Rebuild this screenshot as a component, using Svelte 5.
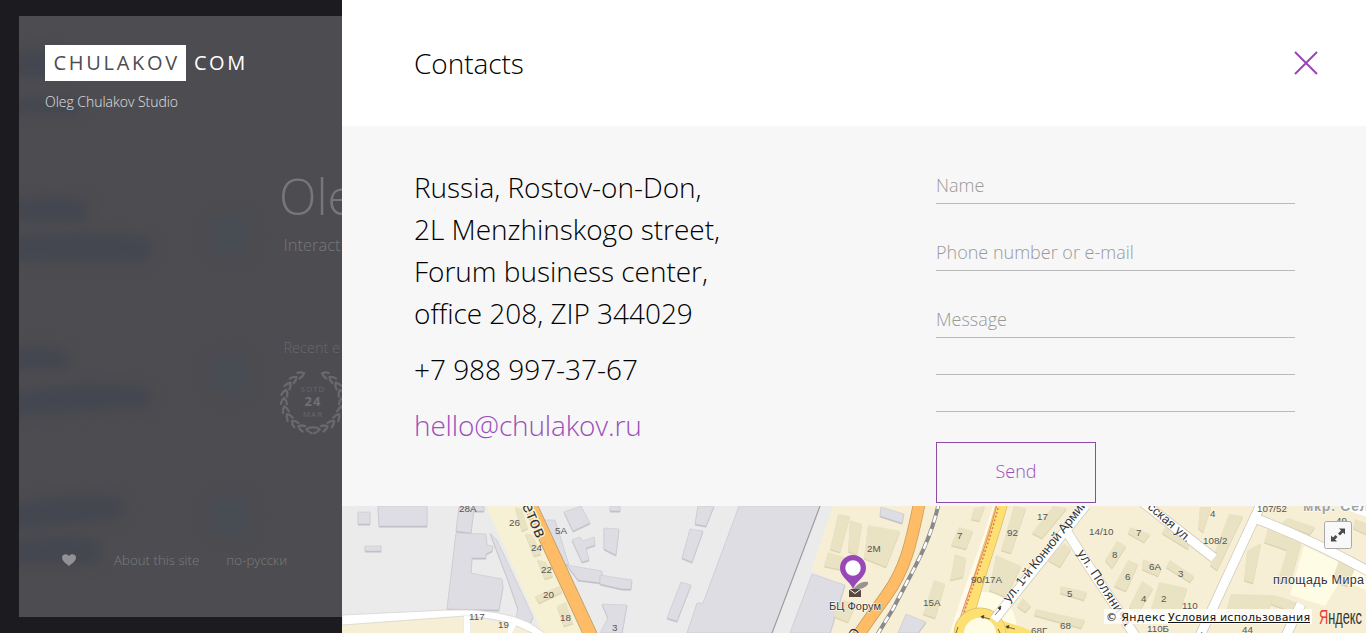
<script>
  const address = ['Russia, Rostov-on-Don,', '2L Menzhinskogo street,', 'Forum business center,', 'office 208, ZIP 344029'];

  const smudges = [
    'M-12 38Q20 30 40 36V62H-12Z', 'M-12 86Q30 76 60 84V98H-12Z',
    'M-12 186Q35 176 66 184Q74 200 62 206L-12 206Z', 'M-12 222Q60 212 130 222Q138 238 126 246L-12 245Z',
    'M-12 334Q25 326 50 336V354H-12Z', 'M-12 378Q60 362 128 372Q136 386 126 392L-12 400Z',
    'M-12 490Q50 474 104 482Q108 496 98 504L-12 514Z', 'M-12 526Q40 516 80 524V548H-12Z'
  ];

  const leaves = Array.from({ length: 10 }, (_, i) => {
    const degrees = 112 + i * 16.5;
    const angle = (degrees * Math.PI) / 180;
    return { x: 29 * Math.cos(angle), y: -29 * Math.sin(angle), turn: -degrees };
  });

  const greyBlocks = [
    '358,512 370,512 370,524 358,524', '378,506 427,506 427,526 379,526', '365,546 381,546 381,551 365,551',
    '459,507 474,508 471,533 456,531', '474,506 484,506 484,511 474,511',
    '456,533 486,534 487,545 493,546 492,551 486,554 486,558 472,558 471,573 481,575 502,579 503,587 499,610 447,609',
    '490,533 497,540 533,617 529,625 516,618 518,609 508,580',
    '564,512 581,506 590,523 573,531', '543,520 555,520 569,565 561,564',
    '572,540 580,537 583,541 594,537 595,545 586,548 589,560 582,562',
    '567,565 602,571 602,583 578,580',
    '604,528 619,529 616,555 604,549', '610,506 620,506 620,511 610,511',
    '600,575 632,580 631,589 622,589 600,584', '602,604 627,605 622,633 600,633 608,618',
    '698,506 714,506 706,526 695,524', '690,529 703,531 692,562 682,558', '681,582 691,585 677,621 667,618',
    '739,506 820,506 772,633 687,633 697,603 703,603',
    '812,574 845,585 830,633 790,633', '881,507 904,514 902,523 880,516',
    '906,614 926,622 918,633 898,633'
  ];

  const sandBlocks = [
    '515,507 522,509 528,528 522,531', '525,533 533,535 541,554 534,556', '537,559 546,562 553,576 545,579',
    '535,596 560,586 562,592 539,603', '557,606 566,602 573,623 564,626',
    '838,514 850,516 840,552 830,549', '850,520 862,524 857,555 848,551', '828,552 860,562 858,573 824,566',
    '868,525 900,531 886,567 864,558', '842,600 856,603 848,622 833,616',
    '974,508 985,506 979,521 971,519', '959,527 973,531 966,549 951,545', '955,554 966,558 963,577 950,580 952,570',
    '934,580 945,584 935,618 923,614', '1014,506 1026,508 1011,553 1001,550', '996,555 1021,566 1006,597 989,590',
    '1053,506 1067,508 1042,538 1032,533', '1064,543 1071,549 1060,567 1048,560',
    '1060,586 1087,592 1084,600 1060,593', '1036,609 1085,620 1081,628 1034,615', '1023,598 1031,606 1025,612 1017,606',
    '1130,527 1150,534 1144,542 1128,533', '1166,526 1190,540 1188,549 1162,533',
    '1128,560 1138,564 1126,591 1114,586', '1143,559 1162,567 1158,576 1142,569',
    '1170,560 1194,576 1190,582 1166,567', '1142,581 1153,588 1138,613 1129,607', '1159,582 1187,588 1178,618 1151,609',
    '1117,541 1126,546 1112,568 1105,560', '1200,507 1211,507 1203,532 1198,528',
    '1229,514 1243,516 1217,570 1210,565', '1288,518 1315,527 1310,534 1280,524',
    '1268,529 1301,543 1290,583 1278,580 1287,550 1264,542', '1247,551 1261,543 1253,583 1244,580',
    '1231,594 1274,595 1267,614 1226,611', '1274,595 1296,602 1294,612 1271,604',
    '1342,552 1358,559 1347,586 1332,580', '1355,519 1366,523 1366,534 1353,528'
  ];

  const numbers = [
    [459, 512, '28А'], [509, 526, '26'], [531, 551, '24'], [541, 573, '22'], [543, 598, '20'], [560, 621, '18'],
    [555, 534, '5А'], [469, 620, '117'], [498, 628, '19'], [612, 631, '3'], [867, 552, '2М'], [957, 539, '7'],
    [1007, 536, '92'], [1037, 520, '17'], [1089, 535, '14/10'], [971, 583, '90/17А'], [923, 606, '15А'],
    [1067, 597, '5'], [1060, 629, '68'], [1031, 634, '68Г'], [1136, 536, '7'], [1210, 517, '4'], [1112, 558, '8'],
    [1203, 544, '108/2'], [1257, 512, '107/52'], [1336, 524, '49'], [1149, 570, '6А'], [1178, 577, '3'],
    [1125, 580, '6'], [1141, 602, '4'], [1161, 602, '2'], [1182, 609, '110'], [1147, 632, '110Б'], [1242, 633, '44']
  ];
</script>

<main>
  <aside>
    <div class="card">
      <svg class="backdrop" width="323" height="601" aria-hidden="true">
        <defs>
          <filter id="haze" x="-20%" y="-20%" width="140%" height="140%" color-interpolation-filters="sRGB"><feGaussianBlur stdDeviation="6" /></filter>
        </defs>
        <g filter="url(#haze)">
          {#each smudges as d}<path {d} fill="#444750" />{/each}
          {#each [219, 359, 501] as cy}<circle cx="211" {cy} r="23" fill="#484c53" />{/each}
        </g>
      </svg>
      <div class="brand"><b>CHULAKOV</b><span>COM</span></div>
      <p class="studio">Oleg Chulakov Studio</p>
      <div class="hero">
        <h1>Ole</h1>
        <p class="sub">Interact</p>
        <p class="events">Recent e</p>
        <svg class="award" width="66" height="68" viewBox="-33 -34 66 68">
          {#each [1, -1] as side}
            <g transform="scale({side} 1)" stroke="#69696c" stroke-width="2.300" fill="none" stroke-linecap="round">
              {#each leaves as leaf}
                <path d="M-3 -4Q-2.500 0 0 2Q2.500 0 3 -4" transform="translate({leaf.x} {leaf.y}) rotate({leaf.turn})" />
              {/each}
            </g>
          {/each}
          <g text-anchor="middle" fill="#68686b" font-weight="400">
            <text y="-9" font-size="8" letter-spacing="1">SOTD</text>
            <text y="5" font-size="13" font-weight="700" letter-spacing="1" fill="#707073">24</text>
            <text y="16" font-size="8" letter-spacing="1">MAR</text>
          </g>
        </svg>
      </div>
      <footer>
        <svg width="14" height="12" viewBox="0 0 14 12"><path d="M7 12C4 9.500 0 7 0 3.500C0 0 5 -1 7 2C9 -1 14 0 14 3.500C14 7 10 9.500 7 12Z" fill="#929295" /></svg>
        <span class="about">About this site</span><span class="lang">по-русски</span>
      </footer>
    </div>
  </aside>

  <section class="panel">
    <header>
      <h2>Contacts</h2>
      <svg width="24" height="24" viewBox="0 0 24 24"><path d="M1 1L23 23M23 1L1 23" stroke="#9a45b5" stroke-width="2" /></svg>
    </header>
    <div class="body">
      <div class="info">
        {#each address as line}<div>{line}</div>{/each}
        <div class="phone">+7 988 997-37-67</div>
        <div class="mail">hello@chulakov.ru</div>
      </div>
      <form>
        <div class="field">Name</div>
        <div class="field">Phone number or e-mail</div>
        <div class="field message">Message</div>
        <div class="rule"></div>
        <div class="rule"></div>
        <button type="button">Send</button>
      </form>
    </div>
    <div class="mapwrap">
      <svg class="map" width="1024" height="127" viewBox="342 506 1024 127">
        <rect x="342" y="506" width="1024" height="127" fill="#ebebeb" />
        <path d="M486 506H536L598 633H542L510 560Z" fill="#f6f0d5" />
        <path d="M833 506H1366V633H826L842 585L811 570Z" fill="#f6efd5" />
        <path d="M812 574L845 585L828 633H785Z" fill="#ebebeb" />
        <path d="M1304 546L1366 575V590L1341 580L1325 606L1290 595Z" fill="#fffce6" />
        <path d="M980 592Q1010 590 1017 625L960 633Z" fill="#fffce6" />
        <g stroke="#c9c8d0" stroke-width=".6">
          {#each greyBlocks as points}
            <polygon {points} transform="translate(0 1.200)" fill="#bcbbc3" />
            <polygon {points} fill="#dedde3" />
          {/each}
        </g>
        <g>
          {#each sandBlocks as points}
            <polygon {points} transform="translate(0 1.500)" fill="#dbd4b4" />
            <polygon {points} fill="#e9e2c3" />
          {/each}
        </g>
        <path d="M342 624L463 616V633H342Z M471 618L507 623V633H471Z M515 627L529 629L535 633H513Z" fill="#f6efd5" />
        <path d="M342 615L448 610Q500 608 530 623L546 634H534L510 623Q485 617 465 616L342 625Z" fill="#fff" stroke="#d2d0c8" stroke-width=".7" />
        <path d="M464 616H470V633H464Z M508 622L516 625L512 633H508Z" fill="#fff" />
        <path d="M820 506L772 633" stroke="#999" stroke-width="1" />

        <g fill="none">
          <path d="M528 500L593 640" stroke="#b99a6b" stroke-width="14" />
          <path d="M528 500L593 640" stroke="#fdbc65" stroke-width="12.500" />
          <path d="M920 500C911 545 905 570 886 596Q870 618 855 640" stroke="#c99a5e" stroke-width="12.500" />
          <path d="M920 500C911 545 905 570 886 596Q870 618 855 640" stroke="#fdbc65" stroke-width="11" />
          <path d="M939 502C930 545 910 575 893 609L874 640" stroke="#8a8a8a" stroke-width="4" />
          <path d="M939 502C930 545 910 575 893 609L874 640" stroke="#fff" stroke-width="2.500" stroke-dasharray="7 7" />
          <path d="M999 500C986 550 966 590 953 640" stroke="#fffaea" stroke-width="9" />
          <path d="M1003 500C990 550 974 585 963 640" stroke="#dac16b" stroke-width="12" />
          <path d="M1003 500C990 550 974 585 963 640" stroke="#fddf72" stroke-width="10.500" />
          <path d="M998 500C985 555 967 590 954 640" stroke="#e9805f" stroke-width="1" />
          <path d="M1000 500C987 555 969 590 956 640" stroke="#e07b55" stroke-width="1.500" stroke-dasharray="2 2" />
          <path d="M992 623L1021 632L1038 640" stroke="#fddf72" stroke-width="10" />
          <circle cx="980" cy="634" r="21" stroke="#d6bf70" stroke-width="11" />
          <circle cx="980" cy="634" r="21" fill="#fffce6" stroke="#fddf72" stroke-width="9.500" />
        </g>
        <g fill="none" stroke="#cecaba" stroke-width="10.500">
          <path d="M994 620L1086 505" /><path d="M1067 532L1090 568L1138 640" /><path d="M1140 500L1214 558" />
          <path d="M1263 500L1242 545L1198 640" /><path d="M1257 519Q1310 539 1370 572" /><path d="M1301 604L1284 640" />
        </g>
        <g fill="none" stroke="#fff" stroke-width="9">
          <path d="M994 620L1086 505" /><path d="M1067 532L1090 568L1138 640" /><path d="M1140 500L1214 558" />
          <path d="M1263 500L1242 545L1198 640" /><path d="M1257 519Q1310 539 1370 572" /><path d="M1301 604L1284 640" />
          <path d="M1343 504L1370 513" />
        </g>
        <g stroke="#3a3930" fill="#3a3930" stroke-width=".7">
          <path d="M995 615L1001 608M1001 606L1000 610L998 608ZM990 619L982 617M981 616.500L984 615.500L983 618.500ZM1015 629L1007 627M1006 626.500L1009 625.500L1008 628.500Z" />
          <path d="M958 627L956 633M1000 633L998 629" />
        </g>
        <g class="number">
          {#each numbers as [x, y, label]}<text {x} {y}>{label}</text>{/each}
        </g>
        <g class="street">
          <text class="wide" transform="translate(518 497) rotate(66)" font-size="17" textLength="46">ветов</text>
          <text transform="translate(1009 603) rotate(-51.500)" font-size="13" textLength="127">ул. 1-й Конной Армии</text>
          <text transform="translate(1077 553) rotate(57)" font-size="13" textLength="88">ул. Полянича</text>
          <text transform="translate(1147 508) rotate(41)" font-size="12.500" textLength="53">сская ул.</text>
          <text x="1273" y="584" font-size="12.500" textLength="91">площадь Мира</text>
          <text x="829" y="610" font-size="11" textLength="52">БЦ Форум</text>
          <text x="1303" y="511" font-size="14" font-weight="700" textLength="75" fill="#a2a2a2">мкр. Сель</text>
          <text transform="translate(855 641) rotate(-58)" font-size="14">О</text>
          <text transform="translate(1199 638) rotate(20)" font-size="12">у.</text>
        </g>
        <path d="M853 589Q861 580 868 582Q870 586 858 590Z" fill="#4d465d" opacity=".55" />
        <path d="M849 589H861V597H849Z" fill="#5a4a3d" /><path d="M849 589L855 593.500L861 589" fill="none" stroke="#fff" stroke-width="1" />
        <path d="M853 589C850 581 840 577 840 568A13 13 0 0 1 866 568C866 577 856 581 853 589Z" fill="#9847b8" />
        <circle cx="853" cy="568" r="7.700" fill="#fff" />
        <rect x="1104" y="609" width="208" height="15" fill="#fff" opacity=".8" />
        <g class="legal">
          <text x="1106" y="621" textLength="59">© Яндекс</text>
          <text x="1168" y="621" textLength="142">Условия использования</text>
        </g>
        <path d="M1168 622.500H1310" stroke="#111" />
        <text class="yandex" x="1319" y="624" textLength="43" lengthAdjust="spacingAndGlyphs"><tspan fill="#e53b32">Я</tspan>ндекс</text>
        <rect x="1324.500" y="521.500" width="27" height="27" rx="2" fill="#f8f8f8" stroke="#aaa" />
        <path d="M1339 528.500H1345V534.500L1343 532.500L1340 535.500L1338 533.500L1341 530.500ZM1331 535.500L1333 537.500L1335.500 535L1337.500 537L1335 539.500L1337 541.500H1331Z" fill="#4a4a4a" />
      </svg>
    </div>
  </section>
</main>

<style>
  :global(body) { margin: 0; overflow: hidden; }
  main { display: flex; width: 1366px; height: 633px; font-family: "Open Sans", sans-serif; font-weight: 300; overflow: hidden; }
  h1, h2, p { margin: 0; font-weight: 300; }
  svg { display: block; }
  aside { box-sizing: border-box; width: 342px; flex: none; padding: 16px 0 16px 19px; background: #1c1b20; }
  .card { position: relative; height: 601px; overflow: hidden; background: #4d4c50; white-space: nowrap; display: flex; flex-direction: column; }
  .backdrop { position: absolute; left: 0; top: 0; }
  .card > :not(.backdrop) { position: relative; }
  .brand { display: flex; margin: 29px 0 0 26px; height: 36px; line-height: 36px; font-size: 20px; font-weight: 370; letter-spacing: 2.700px; color: #fff; }
  .brand b { box-sizing: border-box; width: 141px; padding-left: 8.500px; background: #fff; color: #4d4c50; font-weight: 370; }
  .brand span { padding-left: 8px; letter-spacing: 2.500px; }
  .studio { margin: 11px 0 0 26px; font-size: 14px; line-height: 20px; letter-spacing: -.03px; color: #e0e0e1; }
  .hero { margin-left: 261px; padding-top: 51px; color: #77777a; }
  h1 { font-size: 49px; line-height: 66px; margin-left: -1px; }
  .sub { margin: 4px 0 0 3.500px; font-size: 16.500px; line-height: 24px; }
  .events { margin: 81px 0 0 3.500px; font-size: 14.500px; line-height: 20px; color: #6a6a6d; }
  .award { margin-top: 9px; }
  footer { display: flex; align-items: center; margin: 115px 0 0 43px; height: 20px; font-size: 13.300px; color: #7c7c7f; }
  .about { margin-left: 38px; }
  .lang { margin-left: 27px; }

  .panel { width: 1024px; height: 633px; display: flex; flex-direction: column; background: #f7f7f7; color: #000; }
  header { box-sizing: border-box; display: flex; align-items: center; justify-content: space-between; height: 126px; padding: 0 48px 0 72px; background: #fff; }
  h2 { font-size: 28px; line-height: 42px; letter-spacing: -.05px; }
  .body { display: flex; justify-content: space-between; height: 380px; padding: 0 71px 0 72px; }
  .info { padding-top: 40px; font-size: 28px; line-height: 42px; letter-spacing: -.03px; white-space: nowrap; }
  .phone, .mail { margin-top: 14px; }
  .mail { color: #9a4fb9; letter-spacing: -.15px; }
  form { width: 359px; padding-top: 41px; font-size: 18px; }
  .field { box-sizing: border-box; height: 37px; line-height: 37px; border-bottom: 1px solid #bbb; color: #999; margin-bottom: 30px; }
  .message { margin-bottom: 0; }
  .rule { box-sizing: border-box; height: 37px; border-bottom: 1px solid #bbb; }
  button { display: block; box-sizing: border-box; width: 160px; height: 61px; margin-top: 30px; padding: 0 0 3px; border: 1px solid #8c4ba8; background: transparent; color: #9a4fb9; font: 300 18px "Open Sans", sans-serif; }
  .mapwrap { height: 127px; }
  .number { font: 400 9.800px "Liberation Sans", sans-serif; fill: #555; }
  .street { font-family: "Liberation Sans", sans-serif; font-weight: 400; fill: #333; paint-order: stroke; stroke: #fff; stroke-width: 1px; }
  .wide { stroke: #f8f1da; stroke-width: 3px; }
  .legal { font: 400 11px "DejaVu Sans", sans-serif; fill: #111; }
  .yandex { font: 400 20px "Liberation Sans", sans-serif; fill: #333; }
</style>
